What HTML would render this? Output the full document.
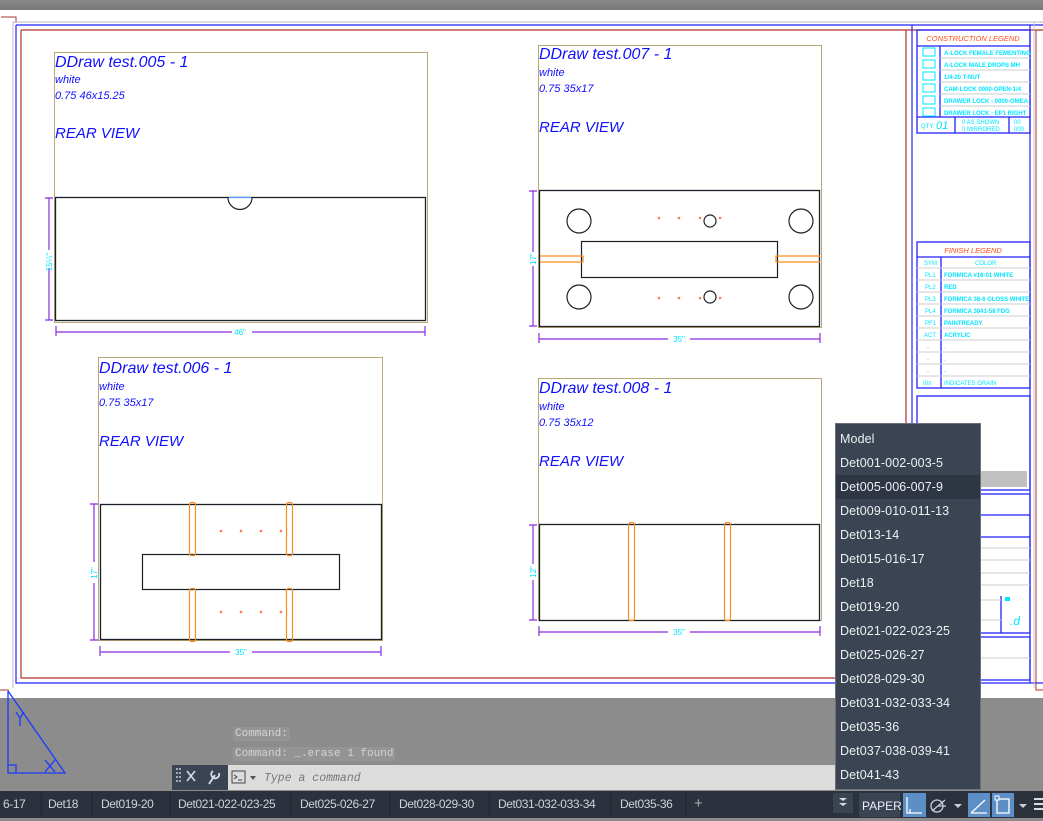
<!DOCTYPE html>
<html><head><meta charset="utf-8"><style>
html,body{margin:0;padding:0;width:1043px;height:818px;overflow:hidden;background:#8c8c8c;font-family:"Liberation Sans",sans-serif}
svg{position:absolute;left:0;top:0}
.dd{position:absolute;left:835px;top:423px;width:146px;height:367px;background:#3b4452;border:1px solid #6a717c;box-sizing:border-box}
.dd div{height:24px;line-height:24px;padding-left:4px;color:#eef0f2;font-size:12.5px;font-family:"Liberation Sans",sans-serif;letter-spacing:0.1px}
.dd .hl{background:#2e3644}
.sb{position:absolute;left:0;top:791px;width:1043px;height:27px;background:#2b323d}
.tab{position:absolute;top:0;height:27px;line-height:20px;color:#cfd3d8;font-size:12px;font-family:"Liberation Sans",sans-serif;letter-spacing:-0.4px}
.cmd{position:absolute;font-family:"Liberation Mono",monospace;font-size:11px;color:#d4d4d4;background:#949494;padding:0 2px;line-height:14px}
</style></head><body>
<svg width="1043" height="818" xmlns="http://www.w3.org/2000/svg" font-family="Liberation Sans, sans-serif">
<defs><linearGradient id="tg" x1="0" y1="0" x2="0" y2="1"><stop offset="0" stop-color="#8a8a8a"/><stop offset="1" stop-color="#777"/></linearGradient></defs>
<rect x="0" y="0" width="1043" height="10" fill="url(#tg)"/>
<rect x="0" y="10" width="1043" height="688" fill="#fff"/>
<path d="M1 17H16V23" stroke="#a33" fill="none"/>
<path d="M13 22H1043M13 22V688" stroke="#c8c8c8" stroke-width="1.2" fill="none"/>
<path d="M16 25H1043M16 25V683H1043" stroke="#2222ff" stroke-width="1.2" fill="none"/>
<path d="M21 30H1043M21 30V678H906V30" stroke="#b03030" stroke-width="1.2" fill="none"/>
<path d="M0 690H9" stroke="#a33"/>
<path d="M1036 30V690H1043" stroke="#b03030" fill="none"/>
<path d="M912 25V683M1030 25V683" stroke="#2222ff" stroke-width="1.2"/>
<path d="M1034 22V688" stroke="#c8c8c8"/>
<g stroke="#2222ff" stroke-width="1.3" fill="none">
<rect x="917" y="30" width="113" height="103"/>
<path d="M917 46H1030M917 117H1030M940 46V117M955 117V133M1009 117V133"/>
</g>
<g stroke="#ccc" stroke-width="1"><path d="M940 58H1030M940 70H1030M940 82H1030M940 94H1030M940 106H1030"/></g>
<text x="973" y="41" font-size="7.5" font-style="italic" fill="#ff4a1a" text-anchor="middle">CONSTRUCTION LEGEND</text>
<g fill="none" stroke="#00e5ff" stroke-width="1"><rect x="923" y="48" width="12" height="8"/><rect x="923" y="60" width="12" height="8"/><rect x="923" y="72" width="12" height="8"/><rect x="923" y="84" width="12" height="8"/><rect x="923" y="96" width="12" height="8"/><rect x="923" y="108" width="12" height="8"/></g>
<g fill="#00e5ff" font-size="6" font-weight="bold"><text x="944" y="55">A-LOCK FEMALE FEMENTING</text><text x="944" y="67">A-LOCK MALE DROPS MH</text><text x="944" y="79">1/4-20 T-NUT</text><text x="944" y="91">CAM-LOCK 0000-OPEN-1/4</text><text x="944" y="103">DRAWER LOCK - 0000-OMEA</text><text x="944" y="115">DRAWER LOCK - EP1 RIGHT</text>
<text x="921" y="128" font-weight="normal" font-size="6">QTY:</text><text x="936" y="129" font-weight="normal" font-size="11" font-style="italic">01</text>
<text x="962" y="124" font-weight="normal">0 AS SHOWN</text><text x="962" y="131" font-weight="normal">0 MIRRORED</text><text x="1014" y="124" font-weight="normal">00</text><text x="1014" y="131" font-weight="normal">000</text></g>
<g stroke="#2222ff" stroke-width="1.3" fill="none"><rect x="917" y="242" width="113" height="146"/><path d="M917 257H1030M941 257V388"/></g>
<g stroke="#ccc"><path d="M917 268H1030M917 280H1030M917 292H1030M917 304H1030M917 316H1030M917 328H1030M917 340H1030M917 352H1030M917 364H1030M917 376H1030"/></g>
<text x="973" y="253" font-size="7.5" font-style="italic" fill="#ff4a1a" text-anchor="middle">FINISH LEGEND</text>
<g fill="#00e5ff" font-size="6"><text x="924" y="265">SYM</text><text x="975" y="265">COLOR</text><text x="925" y="277">PL1</text><text x="925" y="289">PL2</text><text x="925" y="301">PL3</text><text x="925" y="313">PL4</text><text x="925" y="325">PF1</text><text x="924" y="337">ACT</text><text x="927" y="349">-</text><text x="927" y="361">-</text><text x="927" y="373">-</text><text x="923" y="385">III≡</text>
<g font-weight="bold"><text x="944" y="277">FORMICA #16-01 WHITE</text><text x="944" y="289">RED</text><text x="944" y="301">FORMICA 38-6 GLOSS WHITE</text><text x="944" y="313">FORMICA 3041-58 FDG</text><text x="944" y="325">PAINTREADY</text><text x="944" y="337">ACRYLIC</text></g><text x="944" y="349">.</text><text x="944" y="361">.</text><text x="944" y="373">-</text><text x="944" y="385">INDICATES GRAIN</text></g>
<g stroke="#2222ff" stroke-width="1.3" fill="none"><rect x="917" y="396" width="113" height="94"/><rect x="917" y="494" width="113" height="139"/><path d="M917 515H1030M917 537H1030M1001 596V633"/><rect x="917" y="637" width="113" height="43"/></g>
<rect x="920" y="471" width="107" height="16" fill="#c0c0c0"/>
<g stroke="#ccc"><path d="M917 548H1030M917 560H1030M917 573H1030M917 585H1030M917 600H1001M917 620H1001M917 658H1030"/></g>
<rect x="1005" y="597" width="5" height="4" fill="#00e5ff"/>
<text x="1010" y="625" font-size="12" font-style="italic" fill="#00e5ff">.d</text>
<!-- drawing 005 -->
<rect x="54.5" y="52.5" width="373" height="270" fill="none" stroke="#b9a776"/>
<g fill="#1010ff" font-style="italic"><text x="55" y="67" font-size="16">DDraw test.005 - 1</text><text x="55" y="83" font-size="11">white</text><text x="55" y="99" font-size="11">0.75 46x15.25</text><text x="55" y="138" font-size="15">REAR VIEW</text></g>
<rect x="55.5" y="197.5" width="370" height="123" fill="none" stroke="#1a2028" stroke-width="1.3"/>
<path d="M228 197.5A12 12 0 0 0 252 197.5" fill="#fff" stroke="#1a2028" stroke-width="1.2"/>
<path d="M229 197.5H251" stroke="#4aa0ff" stroke-width="1.3"/>
<g stroke="#8a2be2" stroke-width="1.2" fill="none"><path d="M49 198V250M49 268V320M45 198H53M45 320H53"/><path d="M56 332H232M252 332H425M56 326V336M425 326V336"/></g>
<text x="52" y="262" font-size="8" fill="#00e5ff" transform="rotate(-90 52 262)" text-anchor="middle">15¼"</text>
<text x="240" y="335" font-size="8" fill="#00e5ff" text-anchor="middle">46"</text>
<!-- drawing 007 -->
<rect x="538.5" y="45.5" width="283" height="282" fill="none" stroke="#b9a776"/>
<g fill="#1010ff" font-style="italic"><text x="539" y="59" font-size="16">DDraw test.007 - 1</text><text x="539" y="76" font-size="11">white</text><text x="539" y="92" font-size="11">0.75 35x17</text><text x="539" y="132" font-size="15">REAR VIEW</text></g>
<rect x="539.5" y="190.5" width="280" height="136" fill="none" stroke="#1a2028" stroke-width="1.3"/>
<g fill="none" stroke="#1a2028" stroke-width="1.2"><circle cx="579" cy="221" r="12"/><circle cx="801" cy="221" r="12"/><circle cx="579" cy="297" r="12"/><circle cx="801" cy="297" r="12"/><circle cx="710" cy="221" r="6"/><circle cx="710" cy="297" r="6"/><rect x="581.5" y="241.5" width="196" height="36"/></g>
<g fill="none" stroke="#ff8c1a" stroke-width="1.2"><path d="M540 256H583V262H540M820 256H776V262H820"/></g>
<g fill="#ff7a50"><circle cx="659" cy="218" r="1.3"/><circle cx="679" cy="218" r="1.3"/><circle cx="700" cy="218" r="1.3"/><circle cx="720" cy="218" r="1.3"/><circle cx="659" cy="298" r="1.3"/><circle cx="679" cy="298" r="1.3"/><circle cx="700" cy="298" r="1.3"/><circle cx="720" cy="298" r="1.3"/></g>
<g stroke="#8a2be2" stroke-width="1.2" fill="none"><path d="M533 191V252M533 266V326M529 191H537M529 326H537"/><path d="M539 339H668M690 339H820M539 333V343M820 333V343"/></g>
<text x="536" y="259" font-size="8" fill="#00e5ff" transform="rotate(-90 536 259)" text-anchor="middle">17"</text>
<text x="679" y="342" font-size="8" fill="#00e5ff" text-anchor="middle">35"</text>
<!-- drawing 006 -->
<rect x="98.5" y="357.5" width="284" height="283" fill="none" stroke="#b9a776"/>
<g fill="#1010ff" font-style="italic"><text x="99" y="373" font-size="16">DDraw test.006 - 1</text><text x="99" y="390" font-size="11">white</text><text x="99" y="406" font-size="11">0.75 35x17</text><text x="99" y="446" font-size="15">REAR VIEW</text></g>
<rect x="100.5" y="504.5" width="281" height="135" fill="none" stroke="#1a2028" stroke-width="1.3"/>
<rect x="142.5" y="554.5" width="197" height="35" fill="none" stroke="#1a2028" stroke-width="1.2"/>
<g fill="none" stroke="#ff8c1a" stroke-width="1.2"><rect x="189.5" y="502.5" width="6" height="53" rx="2"/><rect x="286.5" y="502.5" width="6" height="53" rx="2"/><rect x="189.5" y="588.5" width="6" height="53" rx="2"/><rect x="286.5" y="588.5" width="6" height="53" rx="2"/></g>
<g fill="#ff7a50"><circle cx="221" cy="531" r="1.3"/><circle cx="241" cy="531" r="1.3"/><circle cx="261" cy="531" r="1.3"/><circle cx="281" cy="531" r="1.3"/><circle cx="221" cy="612" r="1.3"/><circle cx="241" cy="612" r="1.3"/><circle cx="261" cy="612" r="1.3"/><circle cx="281" cy="612" r="1.3"/></g>
<g stroke="#8a2be2" stroke-width="1.2" fill="none"><path d="M94 504V562M94 583V640M90 504H98M90 640H98"/><path d="M100 652H230M252 652H381M100 646V656M381 646V656"/></g>
<text x="97" y="573" font-size="8" fill="#00e5ff" transform="rotate(-90 97 573)" text-anchor="middle">17"</text>
<text x="241" y="655" font-size="8" fill="#00e5ff" text-anchor="middle">35"</text>
<!-- drawing 008 -->
<rect x="538.5" y="378.5" width="283" height="242" fill="none" stroke="#b9a776"/>
<g fill="#1010ff" font-style="italic"><text x="539" y="393" font-size="16">DDraw test.008 - 1</text><text x="539" y="410" font-size="11">white</text><text x="539" y="426" font-size="11">0.75 35x12</text><text x="539" y="466" font-size="15">REAR VIEW</text></g>
<rect x="539.5" y="524.5" width="280" height="96" fill="none" stroke="#1a2028" stroke-width="1.3"/>
<g fill="none" stroke="#ff8c1a" stroke-width="1.2"><rect x="628.5" y="522.5" width="6" height="98" rx="2"/><rect x="724.5" y="522.5" width="6" height="98" rx="2"/></g>
<g stroke="#8a2be2" stroke-width="1.2" fill="none"><path d="M533 525V564M533 580V620M529 525H537M529 620H537"/><path d="M539 632H668M690 632H820M539 626V636M820 626V636"/></g>
<text x="536" y="572" font-size="8" fill="#00e5ff" transform="rotate(-90 536 572)" text-anchor="middle">12"</text>
<text x="679" y="635" font-size="8" fill="#00e5ff" text-anchor="middle">35"</text>
<!-- UCS -->
<g stroke="#1a3aff" stroke-width="1.3" fill="none" transform="translate(8 0)"><path d="M0 691L57 773H0V691"/><path d="M0 765H8V773"/><path d="M8 712L12 718L16 712M12 718V726"/><path d="M37 760L47 772M47 760L37 772"/></g>
<!-- command bar -->
<rect x="172" y="765" width="56" height="25" fill="#3b4452"/>
<g fill="#aab"><rect x="176" y="768" width="2" height="2"/><rect x="176" y="772" width="2" height="2"/><rect x="176" y="776" width="2" height="2"/><rect x="176" y="780" width="2" height="2"/><rect x="179" y="768" width="2" height="2"/><rect x="179" y="772" width="2" height="2"/><rect x="179" y="776" width="2" height="2"/><rect x="179" y="780" width="2" height="2"/></g>
<path d="M187 771L195 781M195 771L187 781" stroke="#dde" stroke-width="1.5"/>
<path d="M209 784L215 775M213 771a4 4 0 1 0 6 2" stroke="#dde" stroke-width="1.8" fill="none"/>
<rect x="228" y="765" width="607" height="25" fill="#dcdcdc"/>
<rect x="232" y="771" width="13" height="12" fill="none" stroke="#444"/><path d="M234 775l3 2l-3 2M238 780h4" stroke="#444" fill="none"/>
<path d="M250 776h6l-3 4z" fill="#555"/>
<text x="264" y="781" font-family="Liberation Mono, monospace" font-size="11.5" font-style="italic" fill="#777">Type a command</text>
</svg>
<div class="cmd" style="left:233px;top:727px">Command:</div>
<div class="cmd" style="left:233px;top:747px">Command: _.erase 1 found</div>
<div class="sb">
<div class="tab" style="left:3px;top:3px">6-17</div>
<div class="tab" style="left:48px;top:3px">Det18</div>
<div class="tab" style="left:101px;top:3px">Det019-20</div>
<div class="tab" style="left:178px;top:3px">Det021-022-023-25</div>
<div class="tab" style="left:300px;top:3px">Det025-026-27</div>
<div class="tab" style="left:399px;top:3px">Det028-029-30</div>
<div class="tab" style="left:498px;top:3px">Det031-032-033-34</div>
<div class="tab" style="left:620px;top:3px">Det035-36</div>
<div class="tab" style="left:694px;top:3px;font-size:15px;color:#aaa">+</div>
<svg width="1043" height="27" style="position:absolute;left:0;top:0">
<g stroke="#1e242d" stroke-width="1"><path d="M41 2V24M92 2V24M170 2V24M291 2V24M390 2V24M489 2V24M611 2V24M686 2V24"/></g>
<rect x="833" y="2" width="20" height="20" fill="#3b4452"/>
<path d="M839 7h8l-4 3zM839 12h8l-4 3z" fill="#ddd"/>
<rect x="859" y="2" width="41" height="24" fill="#3b4452"/>
<text x="862" y="19" font-size="12" fill="#eef" font-family="Liberation Sans">PAPER</text>
<rect x="903" y="2" width="23" height="24" fill="#5d8fc7"/>
<path d="M907 6V22H922M910 18V22" stroke="#fff" stroke-width="1.3" fill="none"/>
<circle cx="937" cy="15" r="6" fill="none" stroke="#ccd" stroke-width="1.3"/><path d="M932 20L945 9M938 15H946" stroke="#ccd" stroke-width="1.3"/>
<path d="M954 13h8l-4 4z" fill="#ccd"/>
<rect x="968" y="2" width="22" height="24" fill="#5d8fc7"/>
<path d="M971 22H987M971 22L985 9" stroke="#fff" stroke-width="1.3"/>
<rect x="992" y="2" width="22" height="24" fill="#5d8fc7"/>
<rect x="997" y="8" width="12" height="14" fill="none" stroke="#fff" stroke-width="1.3"/><rect x="995" y="5" width="4" height="4" fill="#5d8fc7" stroke="#fff"/>
<path d="M1019 13h8l-4 4z" fill="#ccd"/>
<path d="M1034 8h9M1034 13h9M1034 18h9" stroke="#ddd" stroke-width="2"/>
</svg>
</div>
<div class="dd">
<div style="margin-top:3px">Model</div><div>Det001-002-003-5</div><div class="hl">Det005-006-007-9</div><div>Det009-010-011-13</div><div>Det013-14</div><div>Det015-016-17</div><div>Det18</div><div>Det019-20</div><div>Det021-022-023-25</div><div>Det025-026-27</div><div>Det028-029-30</div><div>Det031-032-033-34</div><div>Det035-36</div><div>Det037-038-039-41</div><div>Det041-43</div>
</div>
</body></html>
